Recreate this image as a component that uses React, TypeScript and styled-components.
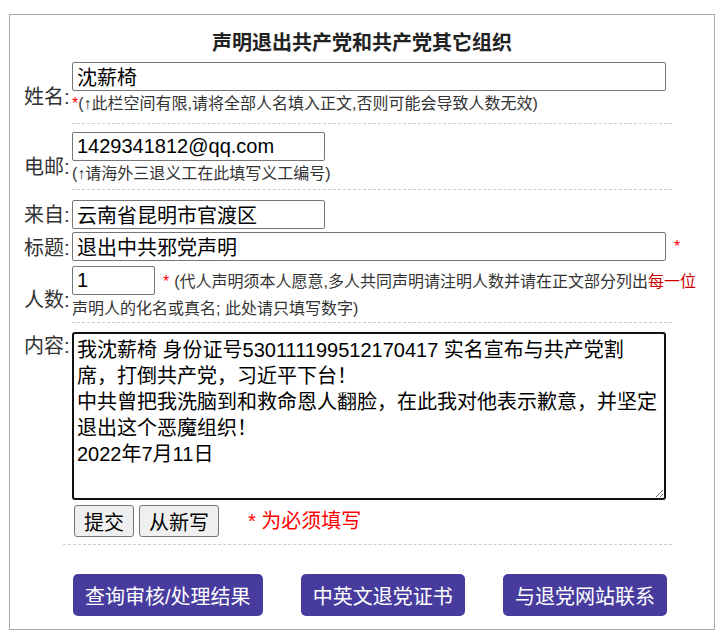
import React, { useEffect, useRef } from "react";
import styled, { createGlobalStyle } from "styled-components";

const FONT = `"Liberation Sans", "Noto Sans CJK SC", sans-serif`;

const GlobalStyle = createGlobalStyle`
  body {
    margin: 0;
    background: #fff;
    color: #333;
    font-family: ${FONT};
  }
`;

const Panel = styled.div`
  margin: 14px 0 0 9px;
  width: 706px;
  box-sizing: border-box;
  border: 1px solid #aaa;
  padding: 15px 0 13px 0;
`;

const Title = styled.h1`
  margin: 0;
  font-size: 20px;
  line-height: 26px;
  font-weight: bold;
  text-align: center;
  color: #222;
`;

const Form = styled.form`
  display: flex;
  flex-direction: column;
  padding-left: 14px;
  margin: 0;
`;

const Row = styled.div<{ $mt: number; $align?: string }>`
  display: grid;
  grid-template-columns: 48px 1fr;
  align-items: ${(p) => p.$align ?? "center"};
  margin-top: ${(p) => p.$mt}px;
`;

const Label = styled.label<{ $pt?: number }>`
  font-size: 20px;
  line-height: 26px;
  padding-top: ${(p) => p.$pt ?? 0}px;
  white-space: nowrap;
  color: #333;
`;

const Field = styled.div`
  display: flex;
  flex-direction: column;
  align-items: flex-start;
`;

const InlineField = styled.div`
  display: flex;
  align-items: center;
`;

const TextInput = styled.input<{ $w: number }>`
  box-sizing: border-box;
  width: ${(p) => p.$w}px;
  height: 29px;
  margin: 0;
  padding: 0 4px;
  border: 1px solid #767676;
  border-radius: 2px;
  background: #fff;
  color: #000;
  font: 20px ${FONT};
  outline: none;
  vertical-align: baseline;
`;

const CountInput = styled(TextInput)`
  margin-bottom: 3px;
`;

const Hint = styled.div<{ $pb: number }>`
  margin-top: 2px;
  width: 600px;
  font-size: 16px;
  line-height: 22px;
  color: #333;
  padding-bottom: ${(p) => p.$pb}px;
  border-bottom: 1px dashed #ccc;
  white-space: nowrap;
`;

const CountBlock = styled.div`
  width: 600px;
  font-size: 16px;
  line-height: 22px;
  color: #333;
  padding-bottom: 2px;
  border-bottom: 1px dashed #ccc;
  white-space: nowrap;
`;

const Star = styled.span<{ $ml?: number }>`
  color: #f00;
  font-size: 16px;
  margin-left: ${(p) => p.$ml ?? 0}px;
`;

const HintText = styled.span<{ $ml?: number }>`
  margin-left: ${(p) => p.$ml ?? 0}px;
`;

const Emph = styled.span`
  color: #c00;
`;

const Textarea = styled.textarea`
  box-sizing: border-box;
  width: 594px;
  height: 168px;
  margin: 0;
  padding: 3px;
  border: 2px solid #111;
  border-radius: 3px;
  color: #000;
  font: 20px/26px ${FONT};
  outline: none;
  resize: both;
`;

const ActionBar = styled.div`
  display: flex;
  align-items: center;
  gap: 5px;
  padding-left: 2px;
`;

const GrayButton = styled.button`
  height: 32px;
  margin: 0;
  padding: 0 9px;
  border: 1px solid #767676;
  border-radius: 3px;
  background: #efefef;
  color: #000;
  font: 20px ${FONT};
`;

const Required = styled.span`
  margin-left: 24px;
  color: #f00;
  font-size: 20px;
  line-height: 26px;
`;

const FooterDivider = styled.hr`
  margin: 7px 0 0 53px;
  width: 609px;
  height: 0;
  border: 0;
  border-top: 1px dashed #ccc;
`;

const LinkBar = styled.nav`
  display: flex;
  justify-content: space-between;
  margin: 29px 0 0 63px;
  width: 594px;
`;

const LinkButton = styled.a`
  display: flex;
  align-items: center;
  height: 42px;
  padding: 0 12px;
  border-radius: 5px;
  background: #473c9e;
  color: #fff;
  font-size: 20px;
  text-decoration: none;
`;

const CONTENT =
  "我沈薪椅 身份证号530111199512170417 实名宣布与共产党割席，打倒共产党，习近平下台！\n中共曾把我洗脑到和救命恩人翻脸，在此我对他表示歉意，并坚定退出这个恶魔组织！\n2022年7月11日";

export default function App() {
  const ref = useRef<HTMLTextAreaElement>(null);
  useEffect(() => {
    const el = ref.current;
    if (el) {
      el.focus();
      el.setSelectionRange(CONTENT.length, CONTENT.length);
    }
  }, []);

  return (
    <>
      <GlobalStyle />
      <Panel>
        <Title>声明退出共产党和共产党其它组织</Title>
        <Form onSubmit={(e) => e.preventDefault()}>
          <Row $mt={6}>
            <Label $pt={8}>姓名:</Label>
            <Field>
              <TextInput $w={594} defaultValue="沈薪椅" />
              <Hint $pb={8}>
                <Star>*</Star>(↑此栏空间有限,请将全部人名填入正文,否则可能会导致人数无效)
              </Hint>
            </Field>
          </Row>

          <Row $mt={8}>
            <Label $pt={12}>电邮:</Label>
            <Field>
              <TextInput $w={253} defaultValue="1429341812@qq.com" />
              <Hint $pb={4}>(↑请海外三退义工在此填写义工编号)</Hint>
            </Field>
          </Row>

          <Row $mt={10}>
            <Label $pt={1}>来自:</Label>
            <Field>
              <TextInput $w={253} defaultValue="云南省昆明市官渡区" />
            </Field>
          </Row>

          <Row $mt={3}>
            <Label $pt={3}>标题:</Label>
            <InlineField>
              <TextInput $w={594} defaultValue="退出中共邪党声明" />
              <Star $ml={8}>*</Star>
            </InlineField>
          </Row>

          <Row $mt={5}>
            <Label $pt={10}>人数:</Label>
            <CountBlock>
              <CountInput $w={83} defaultValue="1" />
              <Star $ml={8}>*</Star>
              <HintText $ml={5}>
                (代人声明须本人愿意,多人共同声明请注明人数并请在正文部分列出
                <Emph>每一位</Emph>
              </HintText>
              <br />
              声明人的化名或真名; 此处请只填写数字)
            </CountBlock>
          </Row>

          <Row $mt={9} $align="start">
            <Label $pt={1}>内容:</Label>
            <Field>
              <Textarea ref={ref} defaultValue={CONTENT} />
            </Field>
          </Row>

          <Row $mt={5}>
            <span />
            <ActionBar>
              <GrayButton type="submit">提交</GrayButton>
              <GrayButton type="reset">从新写</GrayButton>
              <Required>* 为必须填写</Required>
            </ActionBar>
          </Row>
        </Form>
        <FooterDivider />
        <LinkBar>
          <LinkButton href="#">查询审核/处理结果</LinkButton>
          <LinkButton href="#">中英文退党证书</LinkButton>
          <LinkButton href="#">与退党网站联系</LinkButton>
        </LinkBar>
      </Panel>
    </>
  );
}
